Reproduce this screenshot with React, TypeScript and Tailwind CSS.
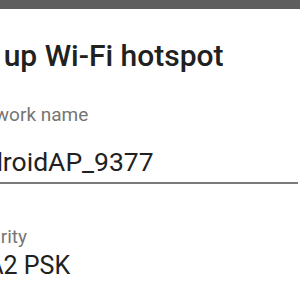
export default function App() {
  return (
    <div className="h-[300px] w-[300px] overflow-hidden bg-white" style={{ fontFamily: "Roboto, 'Noto Sans', sans-serif" }}>
      {/* status / app bar edge */}
      <div className="h-[9px] bg-[#5e5e5e]" />

      <div className="ml-[-48px] w-[346px]">
        <h2 className="mt-[29px] text-[30px] leading-[36px] font-medium text-[#212121]">Set up Wi-Fi hotspot</h2>

        <div className="mt-[30px] ml-[13px] text-[19px] leading-[22px] text-[#757575]">Network name</div>
        <div className="mt-[20px] ml-[4px] border-b-2 border-[#7a7a7a] pb-[4px] text-[26.5px] leading-[32px] text-[#212121]">
          AndroidAP_9377
        </div>

        <div className="mt-[42px] ml-[7px] text-[19px] leading-[22px] text-[#757575]">Security</div>
        <div className="mt-[3px] ml-[-1px] text-[25px] leading-[30px] text-[#212121]">WPA2 PSK</div>
      </div>
    </div>
  );
}
